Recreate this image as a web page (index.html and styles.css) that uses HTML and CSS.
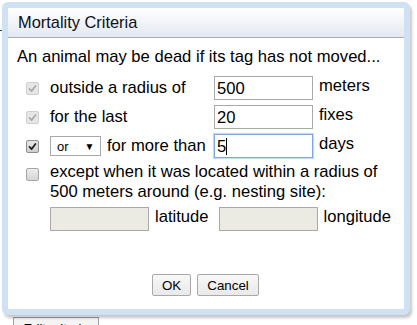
FILE: index.html
```html
<!doctype html>
<html lang="en">
<head>
	<meta charset="UTF-8">
	<title>Mortality Criteria</title>
	<link rel="stylesheet" href="styles.css">
</head>
<body>
<div class="page">
	<span class="mark"></span>
	<button class="edit">Edit criteria</button>
</div>

<div class="dialog">
	<div class="title">Mortality Criteria</div>
	<div class="content">
		<p class="intro">An animal may be dead if its tag has not moved...</p>

		<div class="criteria">
			<span class="chk chk-off-on"><svg viewBox="0 0 13 13"><polyline points="3,7 5.5,9.5 10,3.5"/></svg></span>
			<span class="label">outside a radius of</span>
			<input class="num" type="text" value="500">
			<span class="unit">meters</span>

			<span class="chk chk-off-on"><svg viewBox="0 0 13 13"><polyline points="3,7 5.5,9.5 10,3.5"/></svg></span>
			<span class="label">for the last</span>
			<input class="num" type="text" value="20">
			<span class="unit">fixes</span>

			<span class="chk chk-on"><svg viewBox="0 0 13 13"><polyline points="3,7 5.5,9.5 10,3.5"/></svg></span>
			<span class="label"><span class="select">or<span class="arrow">▼</span></span>for more than</span>
			<span class="focuswrap"><input class="num focus" type="text" value="5"><span class="caret"></span></span>
			<span class="unit">days</span>

			<span class="chk chk-empty"></span>
			<span class="long">except when it was located within a radius of<br>500 meters around (e.g. nesting site):</span>

			<span></span>
			<div class="coords">
				<input class="num off" type="text" disabled>
				<span class="coordlabel">latitude</span>
				<input class="num off" type="text" disabled>
				<span class="coordlabel">longitude</span>
			</div>
		</div>

		<div class="buttons">
			<button class="btn">OK</button>
			<button class="btn">Cancel</button>
		</div>
	</div>
</div>
</body>
</html>
```

FILE: styles.css
```css
body{margin:0;padding:0;background:#fff;font-family:"Liberation Sans",Arial,sans-serif;}
p{margin:0;}

.page{
	padding:317px 0 0 13px;
	height:8px;
	overflow:hidden;
}
.mark{
	position:absolute;
	left:0;
	top:30px;
	width:2px;
	height:1px;
	background:#444;
}
.edit{
	font-family:"Liberation Sans",Arial,sans-serif;
	font-size:13px;
	width:86px;
	height:22px;
	padding:0;
	background:#f4f4f4;
	border:1px solid #a0a0a0;
}

.dialog{
	position:absolute;
	left:2px;
	top:2px;
	width:396px;
	height:301px;
	border:6px solid #cfe1f3;
	border-radius:6px;
	background:#fff;
	box-shadow:2px 3px 3px rgba(0,0,0,.22);
}
.title{
	height:29px;
	line-height:28px;
	padding-left:10px;
	font-size:16.4px;
	color:#0c1020;
	background:linear-gradient(#ffffff,#e3e8f1);
	border-bottom:1px solid #a9acb2;
}
.content{
	padding:0 0 0 9px;
}
.intro{
	font-size:16.6px;
	line-height:20px;
	margin:9px 0 9px 0;
	color:#000;
	white-space:nowrap;
}

.criteria{
	display:grid;
	grid-template-columns:33px 164px 105px auto;
	grid-template-rows:24px 24px 24px auto 24px;
	row-gap:5px;
	font-size:16.6px;
	color:#000;
}
.label{
	align-self:center;
	display:flex;
	align-items:center;
	white-space:nowrap;
}
.unit{
	align-self:start;
	line-height:20px;
}
.long{
	grid-column:2 / 5;
	line-height:20px;
	white-space:nowrap;
	margin-top:-1px;
}

.num{
	box-sizing:border-box;
	width:99px;
	height:24px;
	border:1px solid #a9a9a9;
	padding:1px 2px 0;
	margin:0;
	font-family:"Liberation Sans",Arial,sans-serif;
	font-size:16.6px;
	color:#000;
	background:#fff;
	outline:none;
}
.num.focus{
	border-color:#7da7da;
	box-shadow:0 0 1px 1px #c7dbf3;
}
.num.off{
	background:#ebebe4;
	border-color:#a9a9a9;
}
.focuswrap{
	position:relative;
	display:block;
	width:99px;
	height:24px;
}
.caret{
	position:absolute;
	left:12px;
	top:4px;
	width:1px;
	height:17px;
	background:#000;
}

.chk{
	box-sizing:border-box;
	align-self:center;
	justify-self:start;
	margin-left:9px;
	width:13px;
	height:13px;
	border-radius:2px;
	display:block;
}
.chk svg{display:block;width:11px;height:11px;}
.chk polyline{fill:none;stroke-width:2;stroke-linecap:round;stroke-linejoin:round;}
.chk-off-on{
	background:#e6e6e6;
	border:1px solid #cfcfcf;
}
.chk-off-on polyline{stroke:#a8a8a8;}
.chk-on{
	background:linear-gradient(#e6e6e6,#cfcfcf);
	border:1px solid #8e8e8e;
}
.chk-on polyline{stroke:#1a1a1a;}
.chk-empty{
	background:linear-gradient(#ececec,#d6d6d6);
	border:1px solid #a6a6a6;
	align-self:start;
	margin-top:5px;
}

.select{
	box-sizing:border-box;
	display:inline-flex;
	align-items:center;
	width:51px;
	height:20px;
	border:1px solid #a9a9a9;
	padding-left:6px;
	margin-right:6px;
	font-size:13px;
	background:#fff;
}
.select .arrow{
	font-size:10px;
	margin-left:16px;
}

.coords{
	grid-column:2 / 5;
	display:flex;
	align-items:center;
}
.coordlabel{
	margin:0 10px 0 6px;
	line-height:20px;
	align-self:start;
}

.buttons{
	margin:43px 0 0 135px;
	display:flex;
	gap:6px;
}
.btn{
	height:22px;
	padding:0 9px;
	font-family:"Liberation Sans",Arial,sans-serif;
	font-size:13.33px;
	color:#000;
	background:linear-gradient(#f8f8f8,#e9e9e9);
	border:1px solid #a9a9a9;
	border-radius:2px;
}
```
